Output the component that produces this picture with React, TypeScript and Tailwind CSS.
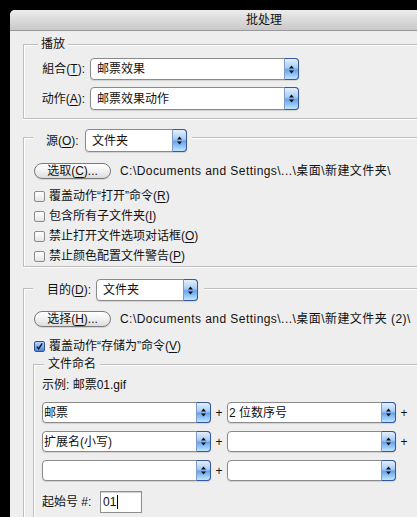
import React from "react";

function Arrows() {
  return (
    <svg viewBox="0 0 7 11" className="w-[7px] h-[11px]">
      <path d="M3.5 1.5L6 4.5H1z" fill="#111" />
      <path d="M1 6.5H6L3.5 9.5z" fill="#111" />
    </svg>
  );
}

function Popup({ value, className, padded = true }: { value?: string; className: string; padded?: boolean }) {
  return (
    <div
      className={`flex items-stretch rounded-[4px] border border-[#8a8a8a] bg-white shadow-[0_1px_1px_rgba(0,0,0,0.12)] ${className}`}
    >
      <div className={`flex-1 flex items-center whitespace-nowrap overflow-hidden ${padded ? "pl-[6px]" : "pl-[1px]"}`}>
        {value}
      </div>
      <div className="-my-[1px] -mr-[1px] w-[15px] flex items-center justify-center rounded-r-[4px] border border-[#35589a] border-l-[#7d9cc9] bg-[linear-gradient(to_bottom,#e4effc,#a9cdf5_42%,#6aa3ea_55%,#9fd0fb_85%,#c5e6ff)]">
        <Arrows />
      </div>
    </div>
  );
}

function AquaButton({ children }: { children: React.ReactNode }) {
  return (
    <div className="ml-[10px] w-[77px] h-[16px] flex items-center justify-center rounded-full border border-[#7b7b7b] bg-[linear-gradient(to_bottom,#ffffff,#f1f1f1_50%,#dcdcdc)] leading-none shadow-[0_1px_0_rgba(0,0,0,0.1)]">
      {children}
    </div>
  );
}

function Check({ checked = false, children }: { checked?: boolean; children: React.ReactNode }) {
  return (
    <div className="h-[20px] pl-[10px] flex items-center gap-[4px] whitespace-nowrap">
      {checked ? (
        <div className="w-[11px] h-[11px] rounded-[2px] border border-[#2f5597] bg-[linear-gradient(to_bottom,#b9d6f7,#4a87e0)] flex items-center justify-center">
          <svg viewBox="0 0 11 11" className="w-[11px] h-[11px]">
            <path d="M2.3 5.6L4.4 8.3L8.8 1.6" fill="none" stroke="#111" strokeWidth="1.7" />
          </svg>
        </div>
      ) : (
        <div className="w-[11px] h-[11px] rounded-[2px] border border-[#8b8b8b] bg-[linear-gradient(to_bottom,#ffffff,#e4e4e4)]" />
      )}
      <span>{children}</span>
    </div>
  );
}

function U({ children }: { children: React.ReactNode }) {
  return <span className="underline underline-offset-[2px]">{children}</span>;
}

const group = "border border-[#bdbdbd] shadow-[inset_1px_1px_0_#ffffff,0_1px_0_#ffffff]";

export default function App() {
  return (
    <div className="w-[417px] h-[517px] overflow-hidden bg-black pl-[10px] pt-[10px] font-['Liberation_Sans','Noto_Sans_CJK_SC',sans-serif] text-[12px] leading-[16px] text-[#111]">
      <div className="w-[508px] h-[560px] rounded-t-[5px] bg-[#eeeeee] overflow-hidden">
        <div className="h-[21px] flex items-center justify-center border-b border-[#999999] bg-[linear-gradient(to_bottom,#ececec,#c9c9c9)]">
          批处理
        </div>

        <div className="px-[13px]">
          {/* 播放 */}
          <div className={`mt-[13px] pb-[8px] ${group}`}>
            <div className="-mt-[9px] ml-[14px] px-[3px] w-fit h-[16px] bg-[#eeeeee]">播放</div>
            <div className="mt-[6px] flex flex-col gap-[7px]">
              <div className="flex items-center">
                <div className="w-[61px] text-right">
                  組合(<U>T</U>):
                </div>
                <Popup value="邮票效果" className="ml-[5px] w-[209px] h-[22px]" />
              </div>
              <div className="flex items-center">
                <div className="w-[61px] text-right">
                  动作(<U>A</U>):
                </div>
                <Popup value="邮票效果动作" className="ml-[5px] w-[209px] h-[23px]" />
              </div>
            </div>
          </div>

          {/* 源 */}
          <div className={`mt-[18px] ${group}`}>
            <div className="-mt-[9px] ml-[9px] pl-[13px] pr-[5px] w-fit flex items-center bg-[#eeeeee]">
              <div className="w-[39px] whitespace-nowrap">
                源(<U>O</U>):
              </div>
              <Popup value="文件夹" className="w-[102px] h-[23px]" />
            </div>
            <div className="mt-[11px] flex items-center">
              <AquaButton>
                选取(<U>C</U>)...
              </AquaButton>
              <span className="ml-[9px] whitespace-nowrap tracking-[0.45px]">
                {"C:\\Documents and Settings\\...\\桌面\\新建文件夹\\"}
              </span>
            </div>
            <div className="mt-[7px]">
              <Check>
                覆盖动作“打开”命令(<U>R</U>)
              </Check>
              <Check>
                包含所有子文件夹(<U>I</U>)
              </Check>
              <Check>
                禁止打开文件选项对话框(<U>O</U>)
              </Check>
              <Check>
                禁止颜色配置文件警告(<U>P</U>)
              </Check>
            </div>
          </div>

          {/* 目的 */}
          <div className={`mt-[21px] ${group}`}>
            <div className="-mt-[10px] ml-[9px] pl-[14px] pr-[6px] w-fit flex items-center bg-[#eeeeee]">
              <div className="w-[49px] whitespace-nowrap">
                目的(<U>D</U>):
              </div>
              <Popup value="文件夹" className="w-[102px] h-[22px]" />
            </div>
            <div className="mt-[10px] flex items-center">
              <AquaButton>
                选择(<U>H</U>)...
              </AquaButton>
              <span className="ml-[9px] whitespace-nowrap tracking-[0.45px]">
                {"C:\\Documents and Settings\\...\\桌面\\新建文件夹 (2)\\"}
              </span>
            </div>
            <div className="mt-[9px]">
              <Check checked>
                覆盖动作“存储为”命令(<U>V</U>)
              </Check>
            </div>

            {/* 文件命名 */}
            <div className={`mt-[8px] ml-[9px] pb-[20px] ${group}`}>
              <div className="-mt-[9px] ml-[10px] px-[4px] w-fit h-[16px] bg-[#eeeeee]">文件命名</div>
              <div className="mt-[5px] pl-[8px] h-[16px]">示例: 邮票01.gif</div>
              <div className="mt-[9px] pl-[8px] flex flex-col gap-[8px]">
                <div className="flex items-center">
                  <Popup value="邮票" padded={false} className="w-[169px] h-[21px]" />
                  <span className="w-[16px] text-center">+</span>
                  <Popup value="2 位数序号" padded={false} className="w-[169px] h-[21px]" />
                  <span className="w-[16px] text-center">+</span>
                </div>
                <div className="flex items-center">
                  <Popup value="扩展名(小写)" padded={false} className="w-[169px] h-[21px]" />
                  <span className="w-[16px] text-center">+</span>
                  <Popup className="w-[169px] h-[21px]" />
                  <span className="w-[16px] text-center">+</span>
                </div>
                <div className="flex items-center">
                  <Popup className="w-[169px] h-[21px]" />
                  <span className="w-[16px] text-center">+</span>
                  <Popup className="w-[169px] h-[21px]" />
                </div>
              </div>
              <div className="mt-[10px] pl-[8px] flex items-center">
                <div className="w-[58px] whitespace-nowrap">起始号 #:</div>
                <div className="w-[42px] h-[22px] flex items-center pl-[2px] bg-white border border-[#8e8e8e] shadow-[inset_0_1px_1px_rgba(0,0,0,0.2)]">
                  01<span className="ml-[1px] w-[1px] h-[14px] bg-black" />
                </div>
              </div>
            </div>
          </div>
        </div>
      </div>
    </div>
  );
}
